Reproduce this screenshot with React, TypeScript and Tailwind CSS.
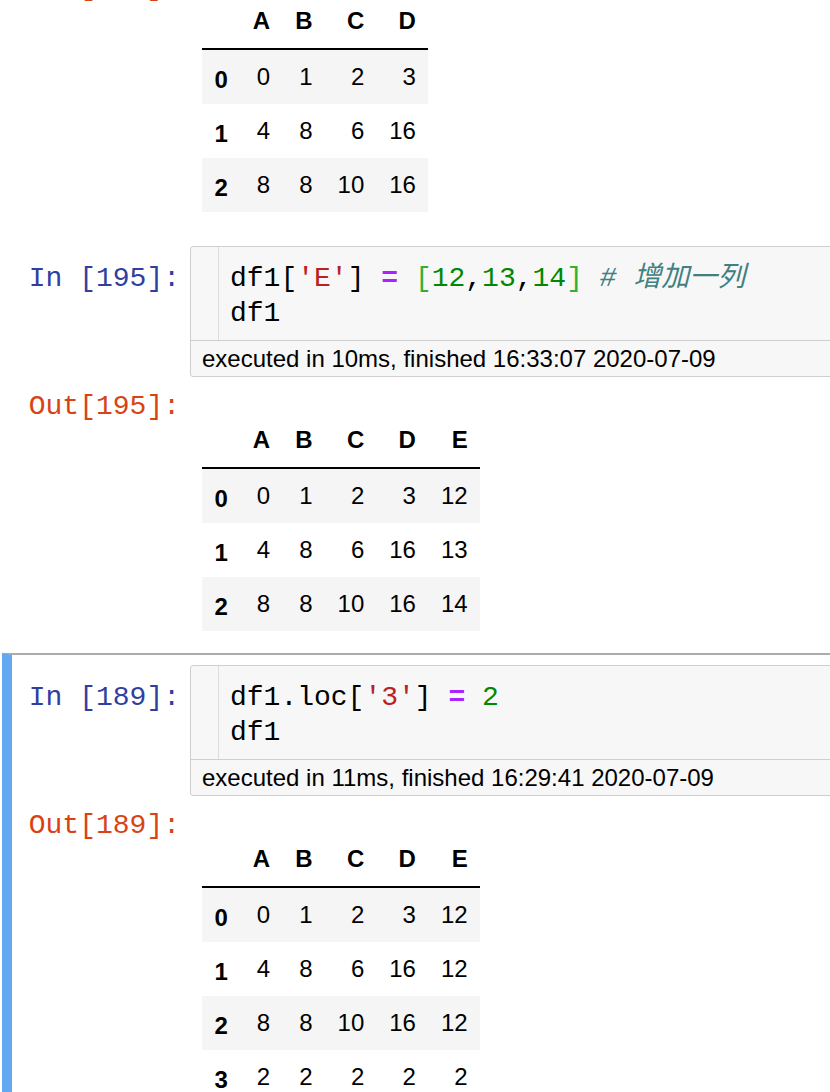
import React from 'react';

type Row = [string, number[]];

const mono = "font-['Liberation_Mono','Noto_Sans_CJK_SC',monospace]";
const sans = "font-['Liberation_Sans',Arial,sans-serif]";

function Frame({ cols, rows }: { cols: string[]; rows: Row[] }) {
  return (
    <table className={`border-separate border-spacing-0 text-[24px] leading-none text-black ${sans}`}>
      <thead>
        <tr className="h-[56px]">
          <th className="border-b-2 border-black px-[12.5px]"></th>
          {cols.map((c) => (
            <th key={c} className="border-b-2 border-black px-[12.5px] text-right font-bold">
              {c}
            </th>
          ))}
        </tr>
      </thead>
      <tbody>
        {rows.map(([idx, vals], i) => (
          <tr key={idx} className={i % 2 === 0 ? 'h-[54px] bg-[#f5f5f5]' : 'h-[54px] bg-white'}>
            <th className="px-[12.5px] pt-[6px] text-right font-bold">{idx}</th>
            {vals.map((v, j) => (
              <td key={j} className="px-[12.5px] text-right">
                {v}
              </td>
            ))}
          </tr>
        ))}
      </tbody>
    </table>
  );
}

function Output({ n, children }: { n: number; children: React.ReactNode }) {
  return (
    <div className="flex items-start">
      <div className={`w-[178px] shrink-0 pr-[10px] mt-[12px] text-right text-[28px] leading-[35px] text-[#D84315] ${mono}`}>
        {`Out[${n}]:`}
      </div>
      <div className="mt-[36px] pl-[12px] mb-[22px]">{children}</div>
    </div>
  );
}

function Input({ n, exec, children }: { n: number; exec: string; children: React.ReactNode }) {
  return (
    <div className="flex items-start">
      <div className={`w-[178px] shrink-0 pr-[10px] pt-[15px] text-right text-[28px] leading-[35px] text-[#303F9F] ${mono}`}>
        {`In [${n}]:`}
      </div>
      <div className="flex-1 rounded-[3px] border border-[#cfcfcf] bg-[#f7f7f7]">
        <div className="flex">
          <div className="w-[28px] shrink-0 border-r border-[#dddddd]"></div>
          <div className={`pl-[11px] pt-[14px] pb-[9px] text-[28px] leading-[35px] text-black whitespace-pre ${mono}`}>
            {children}
          </div>
        </div>
        <div className={`flex h-[36px] items-center border-t border-[#cfcfcf] pl-[11px] text-[24px] text-black ${sans}`}>
          {exec}
        </div>
      </div>
    </div>
  );
}

export default function App() {
  const cols4 = ['A', 'B', 'C', 'D'];
  const cols5 = ['A', 'B', 'C', 'D', 'E'];

  return (
    <div className="h-[1092px] w-[830px] overflow-hidden bg-white">
      <div className="w-[900px] pl-[2px]">
        {/* previous cell, scrolled mostly off screen */}
        <div className="-mt-[42px] border-l-[10px] border-transparent">
          <Output n={194}>
            <Frame
              cols={cols4}
              rows={[
                ['0', [0, 1, 2, 3]],
                ['1', [4, 8, 6, 16]],
                ['2', [8, 8, 10, 16]],
              ]}
            />
          </Output>
        </div>

        <div className="border-t-2 border-l-[10px] border-transparent pt-[10px]">
          <Input n={195} exec="executed in 10ms, finished 16:33:07 2020-07-09">
            <div>
              df1[<span className="text-[#BA2121]">'E'</span>] <span className="font-bold text-[#AA22FF]">=</span>{' '}
              <span className="text-[#33b033]">[</span>
              <span className="text-[#008800]">12</span>,<span className="text-[#008800]">13</span>,
              <span className="text-[#008800]">14</span>
              <span className="text-[#33b033]">]</span> <span className="italic text-[#408080]">#&nbsp;增加一列</span>
            </div>
            <div>df1</div>
          </Input>
          <Output n={195}>
            <Frame
              cols={cols5}
              rows={[
                ['0', [0, 1, 2, 3, 12]],
                ['1', [4, 8, 6, 16, 13]],
                ['2', [8, 8, 10, 16, 14]],
              ]}
            />
          </Output>
        </div>

        <div className="border-t-2 border-l-[10px] border-t-[#ababab] border-l-[#63a9f1] pt-[10px]">
          <Input n={189} exec="executed in 11ms, finished 16:29:41 2020-07-09">
            <div>
              df1.loc[<span className="text-[#BA2121]">'3'</span>] <span className="font-bold text-[#AA22FF]">=</span>{' '}
              <span className="text-[#008800]">2</span>
            </div>
            <div>df1</div>
          </Input>
          <Output n={189}>
            <Frame
              cols={cols5}
              rows={[
                ['0', [0, 1, 2, 3, 12]],
                ['1', [4, 8, 6, 16, 12]],
                ['2', [8, 8, 10, 16, 12]],
                ['3', [2, 2, 2, 2, 2]],
              ]}
            />
          </Output>
        </div>
      </div>
    </div>
  );
}
